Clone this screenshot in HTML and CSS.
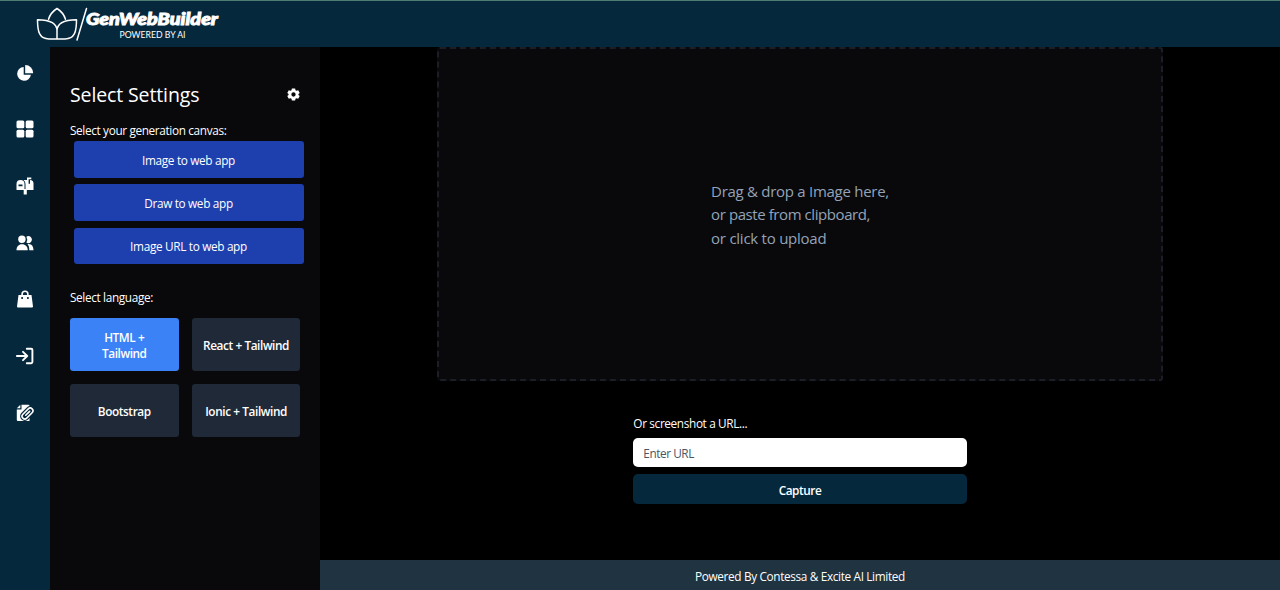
FILE: index.html
```
<!DOCTYPE html>
<html lang="en">
<head>
<meta charset="utf-8">
<title>GenWebBuilder</title>
<link rel="stylesheet" href="styles.css">
</head>
<body>
<div class="app">
  <header class="topbar">
    <svg class="logo" viewBox="0 0 190 40" role="img" aria-label="GenWebBuilder">
      <g fill="none" stroke="#fff" stroke-width="1.5" stroke-linejoin="round" stroke-linecap="round">
        <path d="M12.5 14.2C14 9.5 17 6 21 3.500C25 6 28 9.500 29.500 14.200"/>
        <path d="M21 34V26C21 19 15 14.700 1.500 14.700C1.500 27 3.500 34 13 34H29C38.500 34 40.500 27 40.500 14.700C27 14.700 21 19 21 26"/>
        <path d="M50.500 3.500L41 35"/>
      </g>
      <text class="brand" x="50" y="20" textLength="132" lengthAdjust="spacingAndGlyphs">GenWebBuilder</text>
      <text class="tagline" x="83.500" y="32.800" textLength="66" lengthAdjust="spacingAndGlyphs">POWERED BY AI</text>
    </svg>
  </header>
  <div class="body">
    <nav class="rail">
      <svg class="icon" viewBox="0 0 18 18"><path d="M7.700 3A6.900 6.900 0 1 0 14.900 10.700H7.700Z"/><path d="M9.200 1V9.200H17.200A8 8 0 0 0 9.200 1Z"/></svg>
      <svg class="icon" viewBox="0 0 18 18"><rect x=".5" y=".5" width="7.800" height="7.800" rx="1.500"/><rect x="9.700" y=".5" width="7.800" height="7.800" rx="1.500"/><rect x=".5" y="9.700" width="7.800" height="7.800" rx="1.500"/><rect x="9.700" y="9.700" width="7.800" height="7.800" rx="1.500"/></svg>
      <svg class="icon" viewBox="0 0 18 18"><path fill-rule="evenodd" d="M4.500 3A4 4 0 0 0 .5 7V13H7.700V17.500H10.800V13H17.500V6.500A3.500 3.500 0 0 0 14 3V6.800H12.600V2.300H15.300V.6H11V3H7.500A5 5 0 0 1 9.500 7V12H8.500V7A4 4 0 0 0 4.500 3ZM2.500 7.500V9.300H6.500V7.500Z"/></svg>
      <svg class="icon" viewBox="0 0 18 18"><circle cx="5.900" cy="5.300" r="3.700"/><path d="M.5 16.300C.5 12.500 2.500 10.200 6 10.200S11.700 12.500 11.700 16.300Z"/><path d="M10.400 2.700A3.500 3.500 0 1 1 10.400 8.600A6 6 0 0 0 10.400 2.700ZM11.500 10.100C15.700 9.500 17.500 12.500 17.500 16.300H13.300C13.300 13.500 12.700 11.500 11.500 10.100Z"/></svg>
      <svg class="icon" viewBox="0 0 18 18"><path fill-rule="evenodd" d="M5.300 5V4.200A3.700 3.700 0 0 1 12.700 4.200V5H15.500L17 16.500Q17 17.500 16 17.500H2Q1 17.500 1 16.500L2.500 5ZM6.900 5H11.100V4.200A2.100 2.100 0 0 0 6.900 4.200ZM5.300 7V9H6.900V7ZM11.100 7V9H12.700V7Z"/></svg>
      <svg class="icon" viewBox="0 0 18 18"><path class="line" d="M10.800 1.800H15.200Q16.400 1.800 16.400 3V15Q16.400 16.200 15.200 16.200H10.800M.8 9H11M7 4.800L11.200 9L7 13.200"/></svg>
      <svg class="icon" viewBox="0 0 18 18"><path d="M5.500 .8H12.500Q13.500 .8 13.500 2V17H2Q.8 17 .8 16V5.500H5.500Z"/><path d="M.8 4.200L4.300 .8V4.200Z"/><g transform="rotate(45 11.500 9.500)"><rect class="clip-edge" x="8.800" y="3" width="5.400" height="13" rx="2.700"/><rect class="clip" x="8.800" y="3" width="5.400" height="13" rx="2.700"/><path class="clip" d="M11.500 6.500V12"/></g></svg>
    </nav>
    <aside class="settings">
      <div class="settings-head">
        <h1 class="title">Select Settings</h1>
        <svg class="gear" viewBox="0 0 24 24"><path fill-rule="evenodd" d="M9 1H15L15.700 4.200L17.500 5.200L20.700 4.200L23.500 9.200L21.100 11.300V12.700L23.500 14.800L20.700 19.800L17.500 18.800L15.700 19.800L15 23H9L8.300 19.800L6.500 18.800L3.300 19.800L.5 14.800L2.900 12.700V11.300L.5 9.200L3.300 4.200L6.500 5.200L8.300 4.200ZM12 8A4 4 0 1 0 12 16A4 4 0 1 0 12 8Z"/></svg>
      </div>
      <p class="label label-canvas">Select your generation canvas:</p>
      <div class="canvas-list">
        <button class="canvas-btn">Image to web app</button>
        <button class="canvas-btn">Draw to web app</button>
        <button class="canvas-btn">Image URL to web app</button>
      </div>
      <p class="label label-language">Select language:</p>
      <div class="languages">
        <button class="lang active">HTML +<br>Tailwind</button>
        <button class="lang">React + Tailwind</button>
        <button class="lang">Bootstrap</button>
        <button class="lang">Ionic + Tailwind</button>
      </div>
    </aside>
    <div class="content">
      <main class="main">
        <div class="dropzone"><p class="drop-text">Drag &amp; drop a Image here,<br><span class="drop-mid">or paste from clipboard,</span><br><span class="drop-end">or click to upload</span></p></div>
        <form class="capture">
          <label class="label url-label" for="url">Or screenshot a URL...</label>
          <input class="url" id="url" type="text" placeholder="Enter URL">
          <button class="capture-btn" type="button">Capture</button>
        </form>
      </main>
      <footer class="footer">Powered By Contessa &amp; Excite AI Limited</footer>
    </div>
  </div>
</div>
</body>
</html>
```
FILE: styles.css
```
* { box-sizing: border-box; }
body { margin: 0; background: #000; color: #fff; font-family: "Open Sans", "Noto Sans", sans-serif; font-size: 11.800px; }
button, input { font: inherit; border: 0; }
.app { display: flex; flex-direction: column; height: 590px; overflow: hidden; }
.topbar { height: 47px; flex: none; background: #06283d; border-top: 1px solid #4d7c70; padding: 4px 0 0 36px; }
.logo { display: block; width: 190px; height: 40px; }
.brand { font: italic 900 16.500px Lato, sans-serif; fill: #fff; stroke: #fff; stroke-width: .9px; }
.tagline { font: 9.500px Lato, sans-serif; fill: #fff; }
.body { flex: 1; display: flex; min-height: 0; }
.rail { width: 50px; background: #06283d; display: flex; flex-direction: column; align-items: center; gap: 38.700px; padding-top: 16.500px; }
.icon { width: 18px; height: 18px; flex: none; fill: #fff; }
.line { fill: none; stroke: #fff; stroke-width: 1.900; stroke-linejoin: round; stroke-linecap: round; }
.clip-edge { fill: #06283d; stroke: #06283d; stroke-width: 4; }
.clip { fill: none; stroke: #fff; stroke-width: 1.600; stroke-linecap: round; }
.settings { width: 270px; background: #09090b; padding: 34px 20px 0; }
.settings-head { display: flex; justify-content: space-between; align-items: center; height: 28px; }
.title { margin: 0; font-size: 19.500px; font-weight: 400; line-height: 28px; letter-spacing: -.12px; }
.gear { width: 13px; height: 13px; fill: #fff; margin-top: -2px; }
.label { margin: 0; line-height: 20px; letter-spacing: -.36px; }
.label-canvas { margin-top: 11px; }
.canvas-list { display: flex; flex-direction: column; gap: 6.500px; width: 230px; margin: 1.300px 0 0 3.500px; }
.canvas-btn { height: 36.700px; border-radius: 3.300px; background: #1e40af; color: #fff; padding: 0; letter-spacing: -.33px; }
.label-language { margin-top: 22.500px; }
.languages { display: grid; grid-template-columns: 108.500px 108.500px; gap: 13.300px; margin-top: 10.800px; }
.lang { height: 53.200px; border-radius: 3.300px; background: #1f2937; color: #fff; font-weight: 600; line-height: 16.700px; padding: 2px 0 0; letter-spacing: -.4px; }
.lang.active { background: #3b82f6; }
.content { flex: 1; display: flex; flex-direction: column; }
.main { flex: 1; display: flex; flex-direction: column; align-items: center; }
.dropzone { width: 726px; height: 334px; border: 2px dashed #1b1e26; border-radius: 3px; background: #09090b; display: flex; justify-content: center; align-items: center; }
.drop-text { margin: 2px 0 0; color: #94a3b8; font-size: 15px; line-height: 23.300px; letter-spacing: -.28px; }
.drop-mid { letter-spacing: -.42px; }
.drop-end { letter-spacing: -.25px; }
.capture { width: 333.300px; margin-top: 32px; display: flex; flex-direction: column; }
.url { height: 29px; margin-top: 5px; border-radius: 5px; background: #fff; padding: 1px 10px 0; letter-spacing: -.45px; }
.url::placeholder { color: #4b5563; opacity: 1; }
.capture-btn { height: 30px; margin-top: 7px; border-radius: 5px; background: #06283d; color: #fff; font-weight: 600; padding: 1px 0 0; letter-spacing: -.45px; }
.footer { height: 30px; background: #1f3340; text-align: center; line-height: 32px; letter-spacing: -.35px; }
```
